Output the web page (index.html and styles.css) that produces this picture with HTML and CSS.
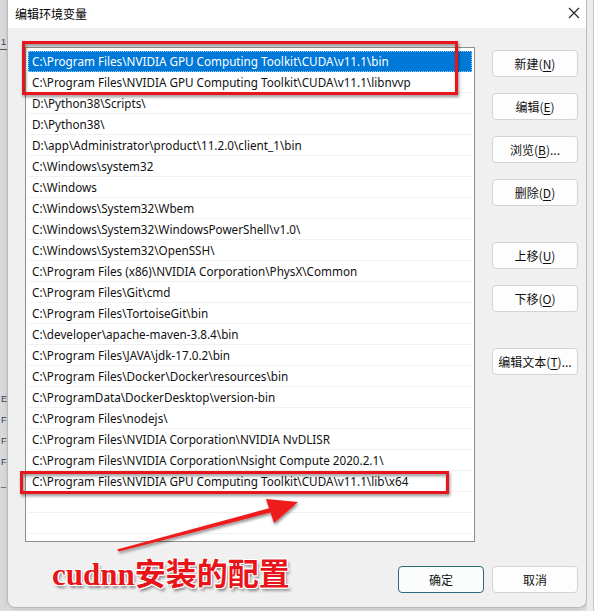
FILE: index.html
```html
<!DOCTYPE html>
<html lang="zh-CN">
<head>
<meta charset="utf-8">
<title>编辑环境变量</title>
<link rel="stylesheet" href="styles.css">
</head>
<body>
<div class="screen">
  <div class="backdrop-left">
    <div class="bl-top">1</div>
    <div class="bl-rule"></div>
    <div class="bl-frags">
      <span>E</span><span>F</span><span>F</span><span>F</span><span>_</span>
    </div>
  </div>
  <div class="dialog">
    <div class="titlebar">
      <span class="title">编辑环境变量</span>
      <svg class="close" width="12" height="12" viewBox="0 0 12 12"><path d="M1 1 L11 11 M11 1 L1 11" stroke="#222" stroke-width="1.1" fill="none"/></svg>
    </div>
    <div class="content">
      <div class="main">
        <div class="list">
          <div class="row selected">C:\Program Files\NVIDIA GPU Computing Toolkit\CUDA\v11.1\bin</div>
          <div class="row">C:\Program Files\NVIDIA GPU Computing Toolkit\CUDA\v11.1\libnvvp</div>
          <div class="row">D:\Python38\Scripts\</div>
          <div class="row">D:\Python38\</div>
          <div class="row">D:\app\Administrator\product\11.2.0\client_1\bin</div>
          <div class="row">C:\Windows\system32</div>
          <div class="row">C:\Windows</div>
          <div class="row">C:\Windows\System32\Wbem</div>
          <div class="row">C:\Windows\System32\WindowsPowerShell\v1.0\</div>
          <div class="row">C:\Windows\System32\OpenSSH\</div>
          <div class="row">C:\Program Files (x86)\NVIDIA Corporation\PhysX\Common</div>
          <div class="row">C:\Program Files\Git\cmd</div>
          <div class="row">C:\Program Files\TortoiseGit\bin</div>
          <div class="row">C:\developer\apache-maven-3.8.4\bin</div>
          <div class="row">C:\Program Files\JAVA\jdk-17.0.2\bin</div>
          <div class="row">C:\Program Files\Docker\Docker\resources\bin</div>
          <div class="row">C:\ProgramData\DockerDesktop\version-bin</div>
          <div class="row">C:\Program Files\nodejs\</div>
          <div class="row">C:\Program Files\NVIDIA Corporation\NVIDIA NvDLISR</div>
          <div class="row">C:\Program Files\NVIDIA Corporation\Nsight Compute 2020.2.1\</div>
          <div class="row">C:\Program Files\NVIDIA GPU Computing Toolkit\CUDA\v11.1\lib\x64</div>
          <div class="row"></div>
          <div class="row"></div>
          <div class="row"></div>
        </div>
        <div class="side">
          <button class="btn">新建(<u>N</u>)</button>
          <button class="btn">编辑(<u>E</u>)</button>
          <button class="btn">浏览(<u>B</u>)...</button>
          <button class="btn">删除(<u>D</u>)</button>
          <button class="btn group">上移(<u>U</u>)</button>
          <button class="btn">下移(<u>O</u>)</button>
          <button class="btn group">编辑文本(<u>T</u>)...</button>
        </div>
      </div>
      <div class="footer">
        <button class="btn default">确定</button>
        <button class="btn">取消</button>
      </div>
    </div>
  </div>
  <div class="backdrop-right"></div>

  <svg class="annot" width="594" height="611" viewBox="0 0 594 611">
    <defs>
      <filter id="sh" x="-10%" y="-10%" width="120%" height="130%">
        <feDropShadow dx="1" dy="2" stdDeviation="1.5" flood-color="#000" flood-opacity="0.45"/>
      </filter>
    </defs>
    <g filter="url(#sh)">
      <rect x="23.5" y="42.5" width="433" height="51" fill="none" stroke="#e8141a" stroke-width="3"/>
      <rect x="21.5" y="472.5" width="426" height="20" fill="none" stroke="#e8141a" stroke-width="3"/>
      <path d="M117 549.5 L281 505 L282 509.5 L119 551.5 Z" fill="#ee1c1c"/>
      <path d="M298 502 L266 499 L274 523 Z" fill="#ee1c1c"/>
    </g>
  </svg>
  <div class="caption">cudnn安装的配置</div>
</div>
</body>
</html>
```

FILE: styles.css
```css
* { box-sizing: border-box; }
html, body { margin: 0; padding: 0; }
body {
  width: 594px;
  height: 611px;
  overflow: hidden;
  background: #e2e2e2;
  font-family: "Noto Sans", "Noto Sans CJK SC", sans-serif;
}
.screen {
  position: relative;
  width: 594px;
  height: 611px;
  display: flex;
  align-items: flex-start;
}
.backdrop-left {
  width: 7px;
  height: 611px;
  flex: none;
  background: #d9d9d9;
  overflow: hidden;
  display: flex;
  flex-direction: column;
  align-items: flex-start;
  color: #2a3f63;
  font-family: "Liberation Sans", sans-serif;
  font-size: 9px;
  white-space: nowrap;
}
.bl-top { margin-top: 35px; height: 14px; line-height: 14px; padding-left: 1px; }
.bl-rule { width: 7px; border-top: 1px solid #555; }
.bl-frags {
  margin-top: 339px;
  display: flex;
  flex-direction: column;
  padding-left: 1px;
}
.bl-frags span { height: 21px; line-height: 21px; }
.backdrop-right {
  width: 7px;
  height: 611px;
  flex: none;
  background: #ececec;
  border-right: 1px solid #c9c9c9;
}
.dialog {
  width: 580px;
  height: 608px;
  flex: none;
  background: #f0f0f0;
  border: 1px solid #b9b9b9;
  border-top: none;
  border-radius: 0 0 8px 8px;
  box-shadow: 0 2px 4px rgba(0,0,0,0.12);
  display: flex;
  flex-direction: column;
}
.titlebar {
  height: 28px;
  background: #ffffff;
  display: flex;
  align-items: center;
  justify-content: space-between;
  padding: 0 8px 0 7px;
}
.title {
  font-family: "Noto Sans CJK SC", sans-serif;
  font-size: 12px;
  color: #000;
  padding-bottom: 2px;
}
.close { margin-top: -2px; margin-right: -2px; }
.content {
  flex: 1;
  display: flex;
  flex-direction: column;
  padding: 19px 8px 0 17px;
}
.main {
  display: flex;
  gap: 17px;
}
.list {
  width: 452px;
  height: 495px;
  background: #fff;
  border: 1px solid #8e8e8e;
  padding: 3px 2px;
  overflow: hidden;
}
.row {
  height: 21px;
  line-height: 21px;
  border-bottom: 1px solid #f1f1f1;
  padding-left: 4px;
  font-size: 11.7px;
  color: #111;
  white-space: nowrap;
  overflow: hidden;
}
.row.selected {
  background: #0078d7;
  color: #fff;
  outline: 1px dotted #9ec9f0;
  outline-offset: -1px;
  border-bottom-color: #0078d7;
}
.side {
  display: flex;
  flex-direction: column;
  gap: 16px;
  padding-top: 3px;
}
.btn {
  width: 86px;
  height: 27px;
  border: 1px solid #d3d3d3;
  border-radius: 4px;
  background: #fdfdfd;
  font-family: "Noto Sans CJK SC", sans-serif;
  font-size: 12px;
  color: #111;
  padding: 0;
  white-space: nowrap;
}
.btn u { text-underline-offset: 2px; }
.side .group { margin-top: 20px; }
.footer {
  display: flex;
  justify-content: flex-end;
  gap: 8px;
  margin-top: 24px;
}
.btn.default {
  border-color: #2a6b7c;
  background: #fbfdfd;
}
.annot {
  position: absolute;
  left: 0;
  top: 0;
  pointer-events: none;
}
.caption {
  position: absolute;
  left: 52px;
  top: 559px;
  font-family: "Liberation Serif", "Noto Sans CJK SC", serif;
  font-weight: bold;
  font-size: 31px;
  line-height: 1;
  color: #e8141a;
  white-space: nowrap;
  text-shadow:
    1px 0 0 #fff, -1px 0 0 #fff, 0 1px 0 #fff, 0 -1px 0 #fff,
    1px 1px 0 #fff, -1px -1px 0 #fff, 1px -1px 0 #fff, -1px 1px 0 #fff,
    2px 3px 3px rgba(0,0,0,0.45);
}
```
